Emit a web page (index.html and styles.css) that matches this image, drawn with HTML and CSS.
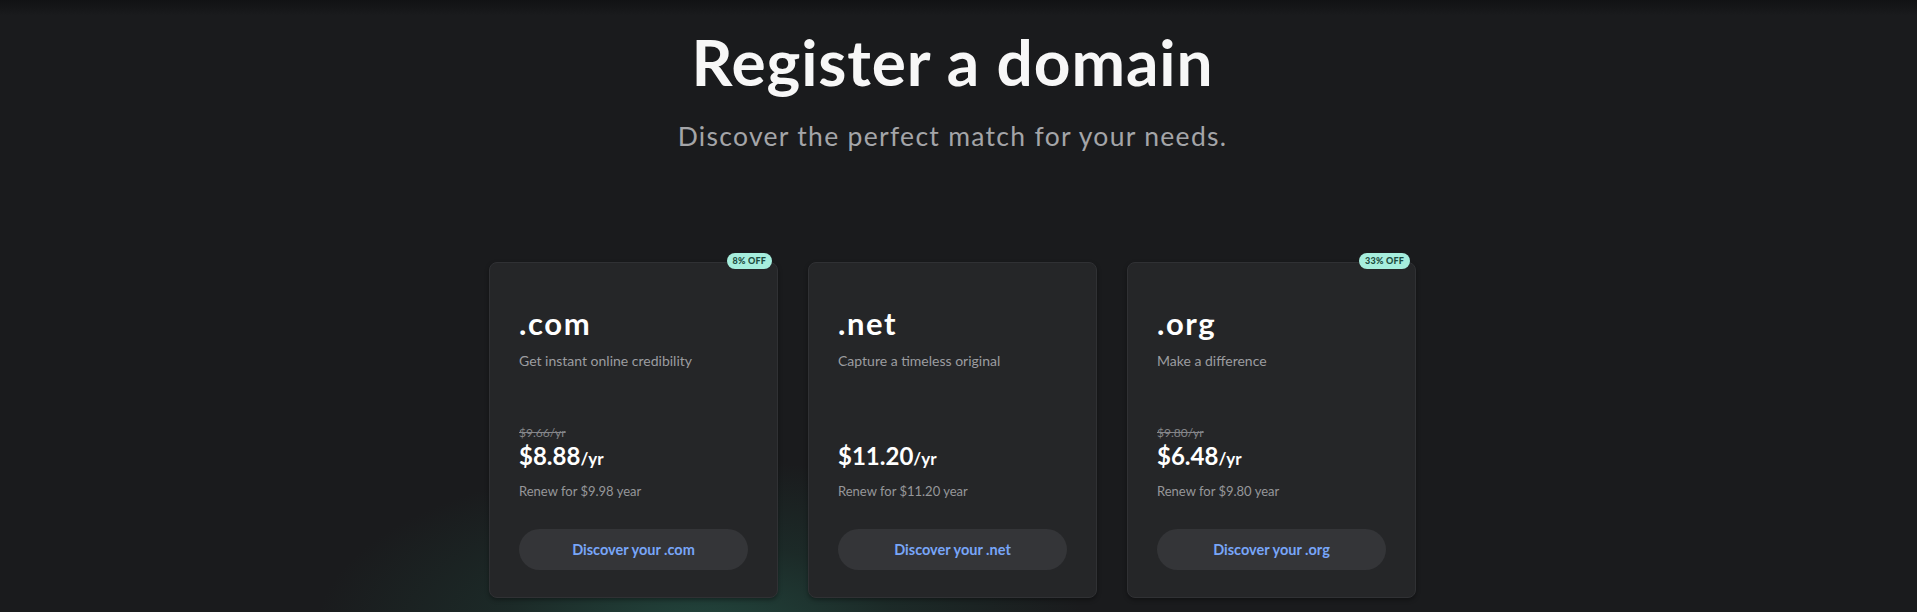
FILE: index.html
```html
<!DOCTYPE html>
<html lang="en">
<head>
<meta charset="utf-8">
<title>Register a domain</title>
<link rel="stylesheet" href="styles.css">
</head>
<body>
<div class="topshade"></div>
<main class="page">
  <header class="hero">
    <h1 class="title">Register a domain</h1>
    <p class="subtitle">Discover the perfect match for your needs.</p>
  </header>
  <section class="cards">
    <div class="glow"></div>
    <article class="card">
      <span class="badge">8% OFF</span>
      <h2 class="tld">.com</h2>
      <p class="desc">Get instant online credibility</p>
      <p class="old">$9.66/yr</p>
      <p class="price">$8.88<span class="per">/yr</span></p>
      <p class="renew">Renew for $9.98 year</p>
      <a class="btn" href="#">Discover your .com</a>
    </article>
    <article class="card">
      <h2 class="tld">.net</h2>
      <p class="desc">Capture a timeless original</p>
      <p class="old empty">&nbsp;</p>
      <p class="price">$11.20<span class="per">/yr</span></p>
      <p class="renew">Renew for $11.20 year</p>
      <a class="btn" href="#">Discover your .net</a>
    </article>
    <article class="card">
      <span class="badge">33% OFF</span>
      <h2 class="tld">.org</h2>
      <p class="desc">Make a difference</p>
      <p class="old">$9.80/yr</p>
      <p class="price">$6.48<span class="per">/yr</span></p>
      <p class="renew">Renew for $9.80 year</p>
      <a class="btn" href="#">Discover your .org</a>
    </article>
  </section>
</main>
</body>
</html>
```
FILE: styles.css
```css
* { box-sizing: border-box; }
html, body { margin: 0; padding: 0; }
body {
  background: #1a1b1d;
  font-family: Lato, "Open Sans", Arial, sans-serif;
  color: #fff;
  height: 612px;
  overflow: hidden;
  position: relative;
}
.topshade {
  position: absolute;
  left: 0; right: 0; top: 0;
  height: 16px;
  background: linear-gradient(#111214, rgba(26,27,29,0));
  pointer-events: none;
}
.page {
  padding: 24px 12px 0 0;
  height: 612px;
  overflow: hidden;
}
.hero { text-align: center; }
.title {
  margin: 0;
  font-size: 64px;
  line-height: 76.8px;
  font-weight: 700;
  color: #f7f7f7;
  letter-spacing: 0.9px;
}
.subtitle {
  margin: 19px 0 0;
  font-size: 26.5px;
  line-height: 32px;
  color: #a4a5a8;
  letter-spacing: 1.3px;
}
.cards {
  position: relative;
  display: flex;
  justify-content: center;
  gap: 30px;
  margin-top: 110px;
}
.glow {
  position: absolute;
  left: 300px;
  top: 190px;
  width: 800px;
  height: 360px;
  background: radial-gradient(ellipse at center, rgba(40,100,84,0.6) 0%, rgba(32,76,64,0.3) 35%, rgba(26,27,29,0) 68%);
  pointer-events: none;
}
.card {
  position: relative;
  width: 289px;
  height: 336px;
  background: #252628;
  border: 1px solid #303134;
  border-radius: 8px;
  padding: 42px 29px 27px;
  box-shadow: 0 2px 4px rgba(0,0,0,0.35);
  display: flex;
  flex-direction: column;
}
.badge {
  position: absolute;
  top: -10px;
  right: 5px;
  height: 16px;
  padding: 0 6px;
  border-radius: 8px;
  background: #a6eedd;
  color: #1b4c40;
  font-size: 9px;
  font-weight: 900;
  line-height: 16px;
  letter-spacing: 0.2px;
}
.tld {
  margin: 0;
  font-size: 31px;
  line-height: 36px;
  font-weight: 700;
  color: #fff;
  letter-spacing: 1.6px;
}
.desc {
  margin: 10px 0 0;
  font-size: 14px;
  line-height: 20px;
  color: #9c9da0;
}
.old {
  margin: 54px 0 0;
  height: 16px;
  font-size: 12px;
  line-height: 16px;
  color: #85868a;
  text-decoration: line-through;
}
.old.empty { visibility: hidden; }
.price {
  margin: 0;
  font-size: 24px;
  line-height: 30px;
  font-weight: 700;
  color: #fff;
}
.per { font-size: 17px; }
.renew {
  margin: 8px 0 0;
  font-size: 13px;
  line-height: 18px;
  color: #96979a;
}
.btn {
  margin-top: 29px;
  height: 43px;
  border-radius: 22px;
  background: #343538;
  color: #78a6f8;
  font-size: 14.5px;
  font-weight: 700;
  text-decoration: none;
  display: flex;
  align-items: center;
  justify-content: center;
}
```
